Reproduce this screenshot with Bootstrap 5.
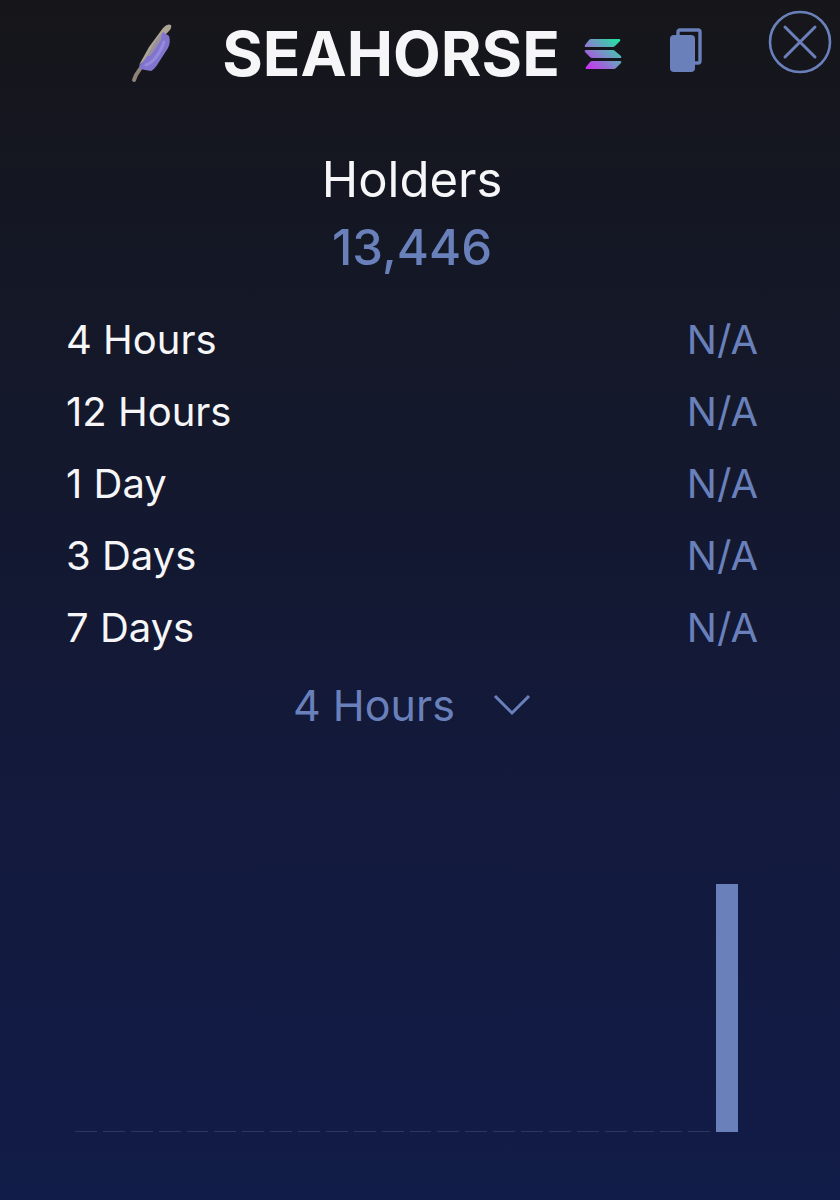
<!DOCTYPE html>
<html lang="en">
<head>
<meta charset="utf-8">
<meta name="viewport" content="width=device-width, initial-scale=1">
<title>SEAHORSE holders</title>
<link href="https://cdn.jsdelivr.net/npm/bootstrap@5.3.0/dist/css/bootstrap.min.css" rel="stylesheet">
<style>
  :root { --accent: #6a80bb; --ink: #f6f6f8; }
  body {
    font-family: Inter, "Liberation Sans", sans-serif;
    color: var(--ink);
    background: linear-gradient(#16161a 0%, #141723 18%, #14182a 32%, #13193a 62%, #111c48 100%);
  }
  .panel { padding: 10px 82px 66px 66px; }
  .accent { color: var(--accent); }
  .token-bar { height: 88px; }
  .token-name { font-size: 62px; line-height: 76px; font-weight: 700; margin: 0 24px 0 40px; }
  .btn-plain { color: var(--accent); background: none; border: 0; padding: 0; line-height: 0; }
  .copy-btn { margin-left: 48px; }
  .close-btn { top: 10px; right: 8px; }
  .holders { margin-top: 48px; }
  .holders h2, .holders p { font-size: 49px; line-height: 68px; margin: 0; }
  .holders p { font-weight: 500; }
  .changes { margin-top: 22px; font-size: 40px; line-height: 50px; }
  .changes th, .changes td { font-weight: 400; padding: 11px 0; }
  .range { margin-top: 10px; }
  .range select {
    appearance: none; background: none; border: 0; outline: 0;
    color: var(--accent); font-size: 43px; height: 62px; line-height: 62px; width: 242px; padding: 0 0 0 2px;
  }
  .range option { color: #111c48; }
  .range svg { right: 2px; pointer-events: none; }
  .chart { height: 248px; gap: 6px; margin: 148px 20px 0 9px; }
  .chart div { background: var(--accent); }
  .chart .empty { height: 1px; opacity: .28; }
</style>
</head>
<body class="min-vh-100">
<main class="panel position-relative">
  <header class="token-bar d-flex justify-content-center align-items-center">
    <svg width="60" height="64" viewBox="0 0 60 64" aria-hidden="true">
      <path d="M12 58 L14 53 L18 47" fill="none" stroke="#8f8278" stroke-width="4" stroke-linecap="round" stroke-linejoin="round"/>
      <path d="M17 43 L27 25 L41 6 Q45 1 49 3 Q50 6 47 9 L41 15 L29 35Z" fill="#aba393"/>
      <path d="M17 44 Q22 39 26 33 L36 17 L41 10 Q44 12 47 14 Q49 20 46 26 L37 40 Q33 47 29 49 Q23 48 18 47Z" fill="#8074cd"/>
      <path d="M26 34 Q29 24 40 11 L39 18 Q33 27 28 34Z" fill="#99909f"/>
      <path d="M24 43 Q35 39 42 20" fill="none" stroke="#958add" stroke-width="3" stroke-linecap="round"/>
    </svg>
    <h1 class="token-name">SEAHORSE</h1>
    <svg width="38" height="30" viewBox="0 0 38 30" role="img" aria-label="Solana">
      <defs>
        <linearGradient id="sol" gradientUnits="userSpaceOnUse" x1="34" y1="0" x2="6" y2="32">
          <stop offset="0" stop-color="#20e5a3"/><stop offset=".5" stop-color="#7a8fc8"/><stop offset="1" stop-color="#cb30ee"/>
        </linearGradient>
      </defs>
      <path fill="url(#sol)" d="M7 0H35Q37 0 36 2L31 7Q30 8 29 8H2Q0 8 1 6L5 1Q6 0 7 0ZM2 11H29Q30 11 31 12L37 17Q38 19 36 19H8Q7 19 6 18L1 13Q0 11 2 11ZM8 22H36Q38 22 37 24L32 29Q31 30 30 30H3Q1 30 2 28L6 23Q7 22 8 22Z"/>
    </svg>
    <button type="button" class="btn-plain copy-btn" aria-label="Copy address">
      <svg width="32" height="52" viewBox="0 0 32 52">
        <path d="M8 8V4Q8 2 10 2H28Q30 2 30 4V33Q30 35 28 35H25" fill="none" stroke="currentColor" stroke-width="3.4"/>
        <rect x="0" y="7" width="25" height="37" rx="4" fill="currentColor"/>
      </svg>
    </button>
    <button type="button" class="btn-plain close-btn position-absolute" aria-label="Close">
      <svg width="64" height="64" viewBox="0 0 64 64" fill="none" stroke="currentColor">
        <circle cx="32" cy="32" r="30" stroke-width="2.6"/>
        <path d="M17 17 47 47M47 17 17 47" stroke-width="3" stroke-linecap="round"/>
      </svg>
    </button>
  </header>

  <section class="holders text-center">
    <h2 class="fw-normal">Holders</h2>
    <p class="accent">13,446</p>
  </section>

  <table class="changes w-100">
    <tbody>
      <tr><th scope="row">4 Hours</th><td class="accent text-end">N/A</td></tr>
      <tr><th scope="row">12 Hours</th><td class="accent text-end">N/A</td></tr>
      <tr><th scope="row">1 Day</th><td class="accent text-end">N/A</td></tr>
      <tr><th scope="row">3 Days</th><td class="accent text-end">N/A</td></tr>
      <tr><th scope="row">7 Days</th><td class="accent text-end">N/A</td></tr>
    </tbody>
  </table>

  <div class="range d-flex justify-content-center">
    <div class="position-relative d-flex align-items-center">
      <label class="visually-hidden" for="interval">Interval</label>
      <select id="interval">
        <option>4 Hours</option><option>12 Hours</option><option>1 Day</option><option>3 Days</option><option>7 Days</option>
      </select>
      <svg class="position-absolute accent" width="38" height="22" viewBox="0 0 38 22" fill="none" stroke="currentColor" stroke-width="3" aria-hidden="true"><path d="M2 2 19 19 36 2"/></svg>
    </div>
  </div>

  <div class="chart d-flex align-items-end" role="img" aria-label="Holders over time">
    <div class="empty flex-fill"></div><div class="empty flex-fill"></div><div class="empty flex-fill"></div><div class="empty flex-fill"></div>
    <div class="empty flex-fill"></div><div class="empty flex-fill"></div><div class="empty flex-fill"></div><div class="empty flex-fill"></div>
    <div class="empty flex-fill"></div><div class="empty flex-fill"></div><div class="empty flex-fill"></div><div class="empty flex-fill"></div>
    <div class="empty flex-fill"></div><div class="empty flex-fill"></div><div class="empty flex-fill"></div><div class="empty flex-fill"></div>
    <div class="empty flex-fill"></div><div class="empty flex-fill"></div><div class="empty flex-fill"></div><div class="empty flex-fill"></div>
    <div class="empty flex-fill"></div><div class="empty flex-fill"></div><div class="empty flex-fill"></div><div class="h-100 flex-fill"></div>
  </div>
</main>
<script src="https://cdn.jsdelivr.net/npm/bootstrap@5.3.0/dist/js/bootstrap.bundle.min.js"></script>
</body>
</html>
